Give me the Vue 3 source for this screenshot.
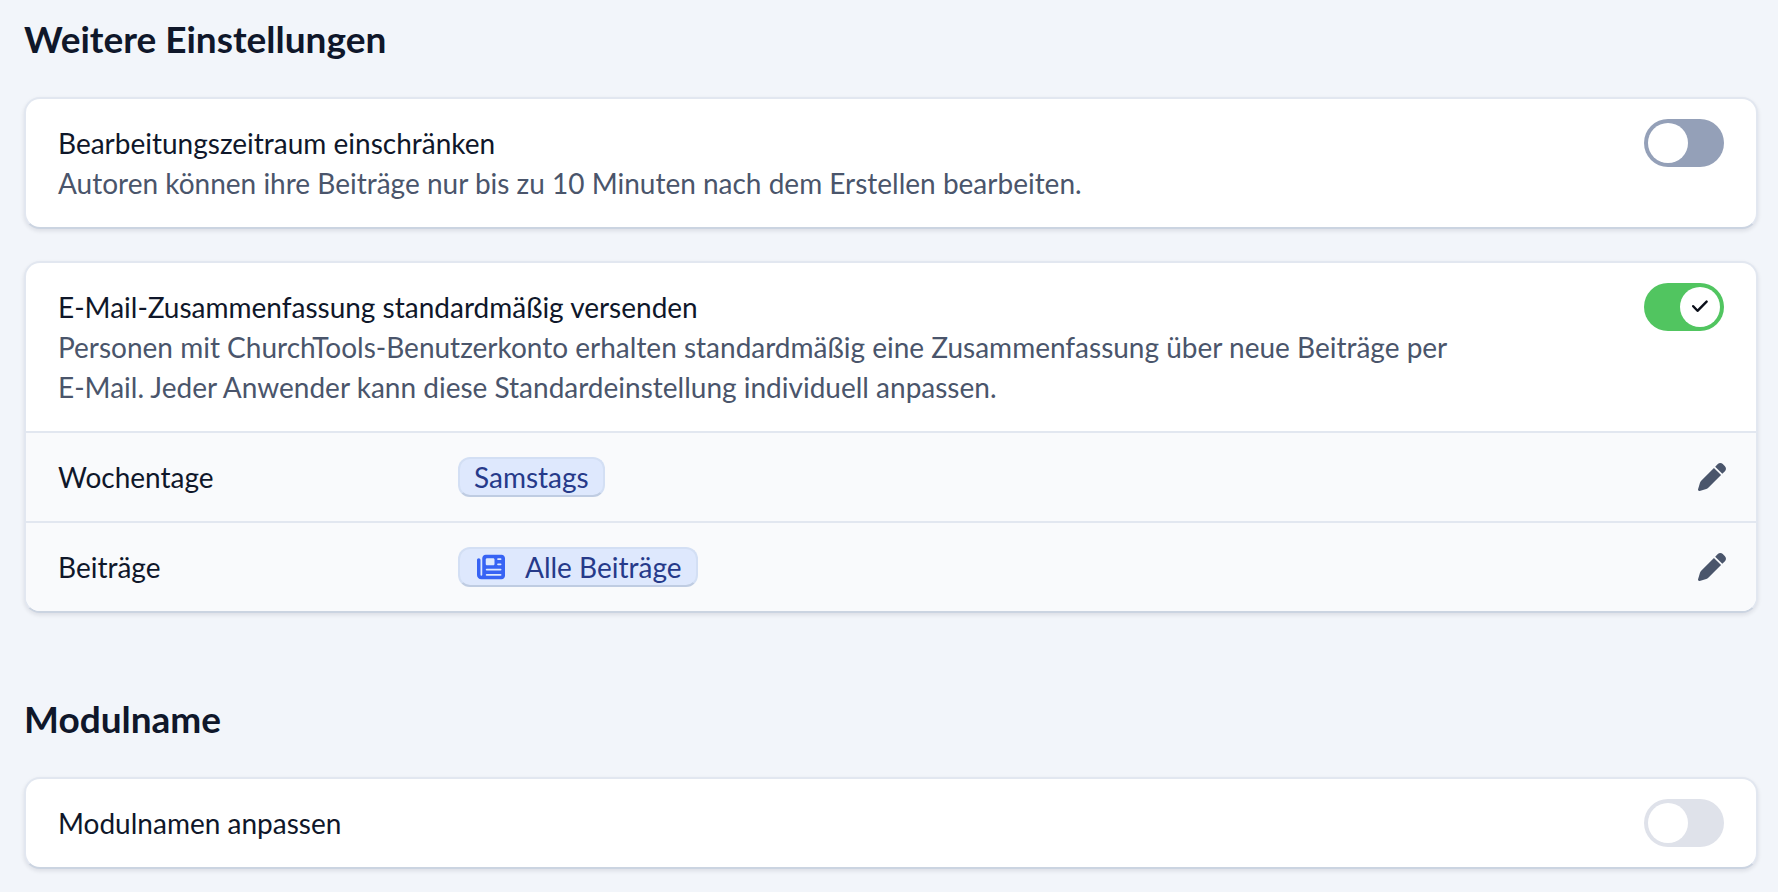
<script setup>
import { ref } from "vue";

const limitEditing = ref(false);
const sendDigest = ref(true);
const customName = ref(false);
</script>

<template>
	<main class="settings">
		<section class="section">
			<h2>Weitere Einstellungen</h2>

			<div class="card">
				<div class="setting">
					<div class="setting-text">
						<label for="limit-editing">Bearbeitungszeitraum einschränken</label>
						<p>Autoren können ihre Beiträge nur bis zu 10 Minuten nach dem Erstellen bearbeiten.</p>
					</div>
					<span class="switch">
						<input id="limit-editing" v-model="limitEditing" type="checkbox" role="switch" />
					</span>
				</div>
			</div>

			<div class="card">
				<div class="setting">
					<div class="setting-text">
						<label for="send-digest">E-Mail-Zusammenfassung standardmäßig versenden</label>
						<p>
							Personen mit ChurchTools-Benutzerkonto erhalten standardmäßig eine Zusammenfassung über neue Beiträge per
							<span class="nowrap">E-Mail.</span> Jeder Anwender kann diese Standardeinstellung individuell anpassen.
						</p>
					</div>
					<span class="switch">
						<input id="send-digest" v-model="sendDigest" type="checkbox" role="switch" />
						<svg v-if="sendDigest" class="check" viewBox="0 0 16 16" aria-hidden="true">
							<path d="M1.2 7.2 5.5 11.8 14.6 2.6" />
						</svg>
					</span>
				</div>

				<div class="row">
					<span class="row-label">Wochentage</span>
					<span class="tag">Samstags</span>
					<button type="button" class="edit-button" aria-label="Wochentage bearbeiten">
						<svg viewBox="0 0 512 512" aria-hidden="true">
							<path d="M362.7 19.3 314.3 67.7 444.3 197.7l48.4-48.4c25-25 25-65.5 0-90.5L453.3 19.3c-25-25-65.5-25-90.5 0zm-71 71L58.6 323.5c-10.4 10.4-18 23.3-22.2 37.4L1 481.2C-1.5 489.7.8 498.8 7 505s15.3 8.5 23.7 6.1l120.3-35.4c14.1-4.2 27-11.8 37.4-22.2L421.7 220.3 291.7 90.3z" />
						</svg>
					</button>
				</div>

				<div class="row">
					<span class="row-label">Beiträge</span>
					<span class="tag">
						<svg class="tag-icon" viewBox="0 0 512 512" aria-hidden="true">
							<path fill-rule="evenodd" d="M96 96c0-35.3 28.7-64 64-64H448c35.3 0 64 28.7 64 64V416c0 35.3-28.7 64-64 64H80c-44.2 0-80-35.8-80-80V128c0-17.7 14.3-32 32-32s32 14.3 32 32V400c0 8.8 7.2 16 16 16s16-7.2 16-16V96zm64 24v80c0 13.3 10.7 24 24 24H296c13.3 0 24-10.7 24-24V120c0-13.3-10.7-24-24-24H184c-13.3 0-24 10.7-24 24zm208-8c0 8.8 7.2 16 16 16h48c8.8 0 16-7.2 16-16s-7.2-16-16-16H384c-8.8 0-16 7.2-16 16zm0 96c0 8.8 7.2 16 16 16h48c8.8 0 16-7.2 16-16s-7.2-16-16-16H384c-8.8 0-16 7.2-16 16zM160 304c0 8.8 7.2 16 16 16H432c8.8 0 16-7.2 16-16s-7.2-16-16-16H176c-8.8 0-16 7.2-16 16zm0 96c0 8.8 7.2 16 16 16H432c8.8 0 16-7.2 16-16s-7.2-16-16-16H176c-8.8 0-16 7.2-16 16z" />
						</svg>
						Alle Beiträge
					</span>
					<button type="button" class="edit-button" aria-label="Beiträge bearbeiten">
						<svg viewBox="0 0 512 512" aria-hidden="true">
							<path d="M362.7 19.3 314.3 67.7 444.3 197.7l48.4-48.4c25-25 25-65.5 0-90.5L453.3 19.3c-25-25-65.5-25-90.5 0zm-71 71L58.6 323.5c-10.4 10.4-18 23.3-22.2 37.4L1 481.2C-1.5 489.7.8 498.8 7 505s15.3 8.5 23.7 6.1l120.3-35.4c14.1-4.2 27-11.8 37.4-22.2L421.7 220.3 291.7 90.3z" />
						</svg>
					</button>
				</div>
			</div>
		</section>

		<section class="section">
			<h2>Modulname</h2>

			<div class="card">
				<div class="setting">
					<div class="setting-text">
						<label for="custom-name">Modulnamen anpassen</label>
					</div>
					<span class="switch">
						<input id="custom-name" v-model="customName" type="checkbox" role="switch" disabled />
					</span>
				</div>
			</div>
		</section>
	</main>
</template>

<style>
body {
	margin: 0;
	background: #f2f5fa;
}
</style>

<style scoped>
.settings {
	display: flex;
	flex-direction: column;
	gap: 82px;
	padding: 15px 20px 23px 24px;
	color: #0f172a;
	font-family: Lato, "Open Sans", sans-serif;
	font-size: 28px;
	line-height: 40px;
}

.section {
	display: flex;
	flex-direction: column;
	gap: 32px;
}

h2 {
	margin: 0 0 2px;
	font-size: 37px;
	font-weight: 700;
	line-height: 48px;
}

.card {
	background: #fff;
	border: 2px solid #e2e7f0;
	border-bottom-color: #cbd4e1;
	border-radius: 16px;
	box-shadow: 0 2px 4px rgba(15, 23, 42, 0.1);
}

.setting {
	display: flex;
	align-items: flex-start;
	gap: 176px;
	padding: 24px 32px;
}

.setting-text {
	flex: 1;
}

.setting-text p {
	margin: 0;
	color: #4a556b;
}

.nowrap {
	white-space: nowrap;
}

.switch {
	position: relative;
	flex-shrink: 0;
	height: 48px;
	margin: -4px 0;
}

.switch input {
	appearance: none;
	display: block;
	box-sizing: border-box;
	width: 80px;
	height: 48px;
	margin: 0;
	padding: 4px;
	border-radius: 24px;
	background: #94a0b8;
	cursor: pointer;
}

.switch input::before {
	content: "";
	display: block;
	width: 40px;
	height: 40px;
	border-radius: 50%;
	background: #fff;
}

.switch input:checked {
	background: #51c560;
}

.switch input:checked::before {
	margin-left: auto;
}

.switch input:disabled {
	background: #dfe2ea;
	cursor: default;
}

.check {
	position: absolute;
	top: 16px;
	right: 16px;
	width: 16px;
	height: 16px;
	fill: none;
	stroke: #0b0f19;
	stroke-width: 2.4;
	stroke-linecap: round;
	stroke-linejoin: round;
	pointer-events: none;
}

.row {
	display: flex;
	align-items: center;
	padding: 24px 30px 24px 32px;
	border-top: 2px solid #e2e7f0;
	background: #f9fafc;
}

.row:last-child {
	border-radius: 0 0 14px 14px;
}

.row-label {
	width: 400px;
}

.tag {
	display: inline-flex;
	align-items: center;
	height: 36px;
	padding: 0 14px;
	border: 2px solid #d3dff4;
	border-bottom-color: #bfcce2;
	border-radius: 12px;
	background: #dee8fd;
	color: #263a8a;
}

.tag-icon {
	width: 28px;
	height: 28px;
	margin: 0 20px 0 3px;
	fill: #3763f4;
}

.edit-button {
	display: flex;
	margin-left: auto;
	padding: 0;
	border: none;
	background: none;
	color: #4a556b;
	cursor: pointer;
}

.edit-button svg {
	width: 28px;
	height: 28px;
	fill: currentColor;
}
</style>
